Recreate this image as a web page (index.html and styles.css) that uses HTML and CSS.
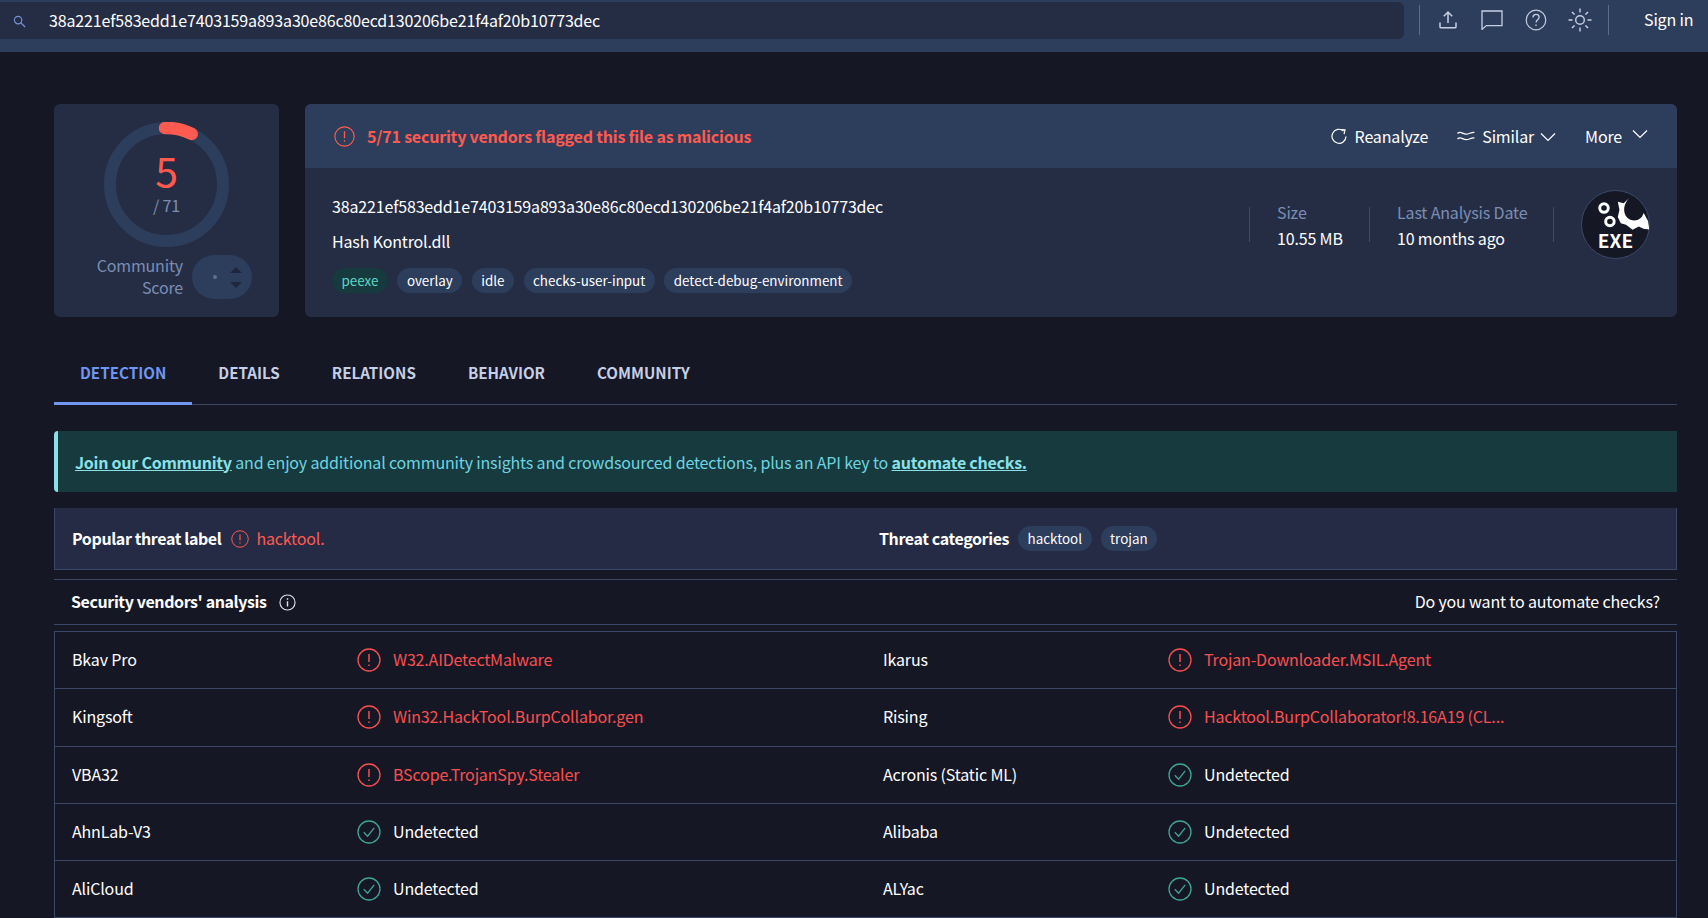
FILE: index.html
```html
<!DOCTYPE html>
<html lang="en">
<head>
  <meta charset="UTF-8">
  <title>VirusTotal - File</title>
  <link rel="stylesheet" href="styles.css">
</head>
<body>
  <svg class="defs" width="0" height="0">
    <symbol id="alert" viewBox="0 0 24 24">
      <circle cx="12" cy="12" r="11" fill="none" stroke="currentColor" stroke-width="1.3"/>
      <path d="M12 6v8M12 16.400v1.600" fill="none" stroke="currentColor" stroke-width="1.500"/>
    </symbol>
    <symbol id="check" viewBox="0 0 24 24">
      <circle cx="12" cy="12" r="11" fill="none" stroke="currentColor" stroke-width="1.3"/>
      <path d="M6.800 12.200l3.800 4 6.600-8.400" fill="none" stroke="currentColor" stroke-width="1.300"/>
    </symbol>
    <symbol id="chevron" viewBox="0 0 16 10">
      <path d="M1 1.500l7 7 7-7" fill="none" stroke="currentColor" stroke-width="1.200"/>
    </symbol>
  </svg>

  <header class="topbar">
    <div class="search">
      <svg class="search-icon" viewBox="0 0 14 14"><circle cx="5.500" cy="5.500" r="4" fill="none" stroke="currentColor" stroke-width="1.200"/><path d="M8.500 8.500l4.500 4.500" stroke="currentColor" stroke-width="1.400"/></svg>
      <span class="search-text">38a221ef583edd1e7403159a893a30e86c80ecd130206be21f4af20b10773dec</span>
    </div>
    <div class="top-actions">
      <svg class="top-icon" viewBox="0 0 20 20"><path d="M10 13V2.200M5.800 6.200L10 2l4.200 4.200M2 12.500v4.200c0 .7.500 1.100 1.100 1.100h13.800c.6 0 1.100-.4 1.100-1.100v-4.200" fill="none" stroke="currentColor" stroke-width="1.500"/></svg>
      <svg class="top-icon wide" viewBox="0 0 22 20"><path d="M1 1h20v14.600H5.400L1 19.400z" fill="none" stroke="currentColor" stroke-width="1.300"/></svg>
      <svg class="top-icon wide tall" viewBox="0 0 22 22"><circle cx="11" cy="11" r="9.800" fill="none" stroke="currentColor" stroke-width="1.200"/><path d="M8 8.400c0-1.800 1.400-3 3.100-3s3 1.200 3 2.800c0 2.500-3 2.500-3 5.200M11 15.500v1.500" fill="none" stroke="currentColor" stroke-width="1.300"/></svg>
      <svg class="top-icon sun" viewBox="0 0 24 24"><circle cx="12" cy="12" r="4.300" fill="none" stroke="currentColor" stroke-width="1.400"/><path d="M12 .5v4M12 19.500v4M.5 12h4M19.500 12h4M3.900 3.900l2.700 2.700M17.400 17.400l2.700 2.700M3.900 20.100l2.700-2.700M17.400 6.600l2.700-2.700" stroke="currentColor" stroke-width="1.400"/></svg>
    </div>
    <a class="sign-in">Sign in</a>
  </header>

  <main class="page">
    <section class="summary">
      <div class="score-card">
        <div class="ring">
          <svg viewBox="0 0 125 125">
            <circle cx="62.500" cy="62.500" r="56.500" fill="none" stroke="#2d3d5c" stroke-width="12"/>
            <path d="M61 6A56.500 56.500 0 0 1 87.700 11.900" fill="none" stroke="#ff5a4f" stroke-width="12.500" stroke-linecap="round"/>
          </svg>
          <div class="ring-text">
            <div class="score">5</div>
            <div class="total">/ 71</div>
          </div>
        </div>
        <div class="community">
          <div class="community-label">Community<br>Score</div>
          <div class="vote">
            <i class="vote-dot"></i>
            <div class="vote-arrows"><i class="arrow-up"></i><i class="arrow-down"></i></div>
          </div>
        </div>
      </div>

      <div class="file-card">
        <div class="file-head">
          <svg class="head-alert"><use href="#alert"/></svg>
          <div class="flag-text">5/71 security vendors flagged this file as malicious</div>
          <button class="head-btn reanalyze">
            <svg class="btn-icon" viewBox="0 0 16 16"><path d="M12.600 3A7 7 0 1 0 15 8.500" fill="none" stroke="currentColor" stroke-width="1.200"/><path d="M9 1.500l5 .3-.9 4.400" fill="none" stroke="currentColor" stroke-width="1.200"/></svg>
            Reanalyze
          </button>
          <button class="head-btn similar">
            <svg class="btn-icon wave" viewBox="0 0 18 12"><path d="M.5 3.500c3-3 5 .7 8.500.7s5-2.200 8.500-1.700M.5 9c3-3 5 .7 8.500.7s5-2.200 8.500-1.700" fill="none" stroke="currentColor" stroke-width="1.200"/></svg>
            Similar
            <svg class="chev"><use href="#chevron"/></svg>
          </button>
          <button class="head-btn more">
            More
            <svg class="chev chev-up"><use href="#chevron"/></svg>
          </button>
        </div>
        <div class="file-body">
          <div class="file-info">
            <div class="hash">38a221ef583edd1e7403159a893a30e86c80ecd130206be21f4af20b10773dec</div>
            <div class="file-name">Hash Kontrol.dll</div>
            <div class="tags">
              <span class="tag tag-green">peexe</span>
              <span class="tag">overlay</span>
              <span class="tag">idle</span>
              <span class="tag">checks-user-input</span>
              <span class="tag">detect-debug-environment</span>
            </div>
          </div>
          <div class="stat stat-size">
            <div class="stat-label">Size</div>
            <div class="stat-value">10.55 MB</div>
          </div>
          <div class="stat stat-date">
            <div class="stat-label">Last Analysis Date</div>
            <div class="stat-value">10 months ago</div>
          </div>
          <div class="exe-badge">
            <svg class="exe-gears" viewBox="63 33 204 204">
              <circle cx="130" cy="85" r="13" fill="none" stroke="#fff" stroke-width="9"/>
              <circle cx="148" cy="126" r="13" fill="none" stroke="#fff" stroke-width="9"/>
              <path d="M172 66L190 70L205 56C192 72 188 88 194 104C202 124 228 130 245 112L251 100L264 124L268 150L250 148L236 141L217 151L197 136L181 131L172 112L177 90Z" fill="#fff"/>
            </svg>
            <span class="exe-text">EXE</span>
          </div>
        </div>
      </div>
    </section>

    <nav class="tabs">
      <a class="tab active">Detection</a>
      <a class="tab">Details</a>
      <a class="tab">Relations</a>
      <a class="tab">Behavior</a>
      <a class="tab">Community</a>
    </nav>

    <div class="banner">
      <a class="banner-link">Join our Community</a>&nbsp;and enjoy additional community insights and crowdsourced detections, plus an API key to&nbsp;<a class="banner-link">automate checks.</a>
    </div>

    <div class="threat-bar">
      <div class="threat-col">
        <b>Popular threat label</b>
        <svg class="threat-alert"><use href="#alert"/></svg>
        <span class="threat-name">hacktool.</span>
      </div>
      <div class="threat-col threat-cats">
        <b>Threat categories</b>
        <span class="tag">hacktool</span>
        <span class="tag">trojan</span>
      </div>
    </div>

    <div class="analysis-head">
      <b>Security vendors' analysis</b>
      <svg class="info-icon" viewBox="0 0 18 18"><circle cx="9" cy="9" r="8" fill="none" stroke="currentColor" stroke-width="1.200"/><path d="M9 7.800v5.400M9 4.600v1.600" stroke="currentColor" stroke-width="1.500"/></svg>
      <span class="automate">Do you want to automate checks?</span>
    </div>

    <div class="vendors">
      <div class="vendor"><span class="vendor-name">Bkav Pro</span><svg class="verdict-icon bad"><use href="#alert"/></svg><span class="verdict bad">W32.AIDetectMalware</span></div>
      <div class="vendor"><span class="vendor-name">Ikarus</span><svg class="verdict-icon bad"><use href="#alert"/></svg><span class="verdict bad">Trojan-Downloader.MSIL.Agent</span></div>
      <div class="vendor"><span class="vendor-name">Kingsoft</span><svg class="verdict-icon bad"><use href="#alert"/></svg><span class="verdict bad">Win32.HackTool.BurpCollabor.gen</span></div>
      <div class="vendor"><span class="vendor-name">Rising</span><svg class="verdict-icon bad"><use href="#alert"/></svg><span class="verdict bad">Hacktool.BurpCollaborator!8.16A19 (CL...</span></div>
      <div class="vendor"><span class="vendor-name">VBA32</span><svg class="verdict-icon bad"><use href="#alert"/></svg><span class="verdict bad">BScope.TrojanSpy.Stealer</span></div>
      <div class="vendor"><span class="vendor-name">Acronis (Static ML)</span><svg class="verdict-icon ok"><use href="#check"/></svg><span class="verdict">Undetected</span></div>
      <div class="vendor"><span class="vendor-name">AhnLab-V3</span><svg class="verdict-icon ok"><use href="#check"/></svg><span class="verdict">Undetected</span></div>
      <div class="vendor"><span class="vendor-name">Alibaba</span><svg class="verdict-icon ok"><use href="#check"/></svg><span class="verdict">Undetected</span></div>
      <div class="vendor"><span class="vendor-name">AliCloud</span><svg class="verdict-icon ok"><use href="#check"/></svg><span class="verdict">Undetected</span></div>
      <div class="vendor"><span class="vendor-name">ALYac</span><svg class="verdict-icon ok"><use href="#check"/></svg><span class="verdict">Undetected</span></div>
    </div>
  </main>
</body>
</html>
```

FILE: styles.css
```css
* {
  margin: 0; padding: 0; box-sizing: border-box;
}
html, body {
  height: 100%;
  overflow: hidden;
}
body {
  background: #161725;
  color: #fff;
  font-family: "Noto Sans CJK SC", "Noto Sans", sans-serif;
  font-size: 16px;
  line-height: 22px;
  letter-spacing: -0.16px;
}
.defs {
  display: block;
  height: 0;
}

/* top bar */
.topbar {
  height: 52px;
  background: #2d3d5c;
  display: flex;
  align-items: flex-start;
  padding-top: 2px;
}
.search {
  width: 1404px; height: 37px;
  background: #252d45;
  border-radius: 0 6px 6px 0;
  display: flex;
  align-items: center;
  padding-left: 13px;
}
.search-icon {
  width: 13px; height: 13px;
  color: #7b93d6;
  margin-right: 23px;
  margin-top: 2px;
}
.search-text {
  margin-top: -2px;
}
.top-actions {
  margin-left: 15px;
  height: 30px;
  margin-top: 3px;
  width: 190px;
  border-left: 1px solid #5a6c90;
  border-right: 1px solid #5a6c90;
  display: flex;
  align-items: center;
  color: #c7d0e2;
  padding-left: 6px;
}
.top-icon {
  width: 20px; height: 20px;
  margin: 0 12px;
  flex: none;
}
.top-icon.wide {
  width: 22px;
  margin: 0 11px;
}
.top-icon.tall {
  height: 22px;
}
.sun {
  width: 24px; height: 24px;
  margin: 0 10px;
}
.sign-in {
  margin-left: 35px;
  margin-top: 6px;
}

/* summary cards */
.page {
  padding: 52px 31px 0 54px;
}
.summary {
  display: flex;
  gap: 26px;
  height: 213px;
}
.score-card {
  width: 225px;
  background: #252d45;
  border-radius: 6px;
  padding-top: 18px;
  padding-left: 50px;
}
.ring {
  width: 125px; height: 125px;
  position: relative;
}
.ring svg {
  display: block;
  width: 125px; height: 125px;
}
.ring-text {
  position: absolute;
  left: 0; top: 0;
  width: 100%;
  text-align: center;
}
.score {
  color: #ff5a4f;
  font-size: 41px;
  line-height: 44px;
  margin-top: 25px;
}
.total {
  color: #7c8db3;
  font-size: 16px;
  line-height: 22px;
  margin-top: 3px;
}
.community {
  display: flex;
  margin-top: 8px;
  margin-left: -50px;
}
.community-label {
  width: 129px;
  text-align: right;
  color: #7c8db3;
  line-height: 22px;
  margin-top: -1px;
}
.vote {
  margin-left: 9px;
  width: 60px; height: 44px;
  background: #2d3d5c;
  border-radius: 22px;
  display: flex;
  align-items: center;
  padding-left: 21px;
}
.vote-dot {
  width: 4px; height: 4px;
  border-radius: 50%;
  background: #5f6f90;
}
.vote-arrows {
  margin-left: 13px;
  display: flex;
  flex-direction: column;
  gap: 9px;
}
.arrow-up, .arrow-down {
  width: 0; height: 0;
  border-left: 6px solid transparent;
  border-right: 6px solid transparent;
}
.arrow-up {
  border-bottom: 6px solid #1f2740;
}
.arrow-down {
  border-top: 6px solid #1f2740;
}
.file-card {
  flex: 1;
  background: #252d45;
  border-radius: 6px;
  overflow: hidden;
}
.file-head {
  height: 64px;
  background: #2d3d5c;
  display: flex;
  align-items: center;
  padding-left: 29px;
}
.head-alert {
  width: 21px; height: 21px;
  color: #ff5a4f;
  flex: none;
}
.flag-text {
  color: #ff5a4f;
  font-weight: 600;
  letter-spacing: -0.2px;
  margin-left: 12px;
  flex: 1;
}
.head-btn {
  background: none;
  border: 0;
  color: #fff;
  font: inherit;
  letter-spacing: inherit;
  display: flex;
  align-items: center;
}
.btn-icon {
  width: 16px; height: 16px;
  margin-right: 8px;
}
.wave {
  width: 18px; height: 12px;
  margin-right: 7px;
}
.similar {
  margin-left: 29px;
}
.more {
  margin-left: 29px;
  margin-right: 29px;
}
.chev {
  width: 16px; height: 10px;
  margin-left: 6px;
  margin-top: 2px;
}
.chev-up {
  margin-left: 10px;
  margin-top: -4px;
}
.file-body {
  display: flex;
  padding: 28px 27px 0 27px;
}
.file-info {
  width: 917px;
}
.hash {
  margin-top: -1px;
}
.file-name {
  margin-top: 13px;
}
.tags {
  display: flex;
  gap: 9.5px;
  margin-top: 16px;
}
.tag {
  display: inline-block;
  height: 25px;
  line-height: 25px;
  padding: 0 9.500px;
  border-radius: 13px;
  background: #2d3d5c;
  color: #fff;
  font-size: 13.400px;
  letter-spacing: 0;
}
.tag-green {
  background: #163a3e;
  color: #5fd6c6;
}
.stat {
  height: 35px;
  margin-top: 11px;
  border-left: 1px solid #3a4a6b;
  padding-left: 27px;
}
.stat-size {
  width: 120px;
}
.stat-date {
  width: 185px;
  border-right: 1px solid #3a4a6b;
}
.stat-label {
  color: #7c8db3;
  margin-top: -6px;
}
.stat-value {
  margin-top: 4px;
  white-space: nowrap;
}
.exe-badge {
  width: 69px; height: 69px;
  flex: none;
  position: relative;
  border-radius: 50%;
  background: #161725;
  border: 1px solid #3a4a6b;
  margin-top: -6px;
  margin-left: 27px;
  text-align: center;
}
.exe-gears {
  position: absolute;
  left: 0; top: 0;
  width: 67px; height: 67px;
}
.exe-text {
  position: absolute;
  left: 0; top: 39px;
  width: 100%;
  font-size: 19px;
  font-weight: 700;
  letter-spacing: 0;
  line-height: 20px;
}

/* tabs */
.tabs {
  display: flex;
  margin-top: 26px;
  height: 62px;
  border-bottom: 1px solid #3a4766;
}
.tab {
  padding: 0 26px;
  height: 62px;
  line-height: 59px;
  font-size: 15.200px;
  letter-spacing: 0;
  font-weight: 600;
  text-transform: uppercase;
  color: #c5cfe6;
}
.tab.active {
  color: #6f96f0;
  border-bottom: 3px solid #6f96f0;
}

/* banner */
.banner {
  margin-top: 26px;
  height: 61px;
  background: #163a3e;
  border-left: 4px solid #8be0e8;
  border-radius: 4px 0 0 4px;
  color: #6ed4e0;
  padding-left: 17px;
  display: flex;
  align-items: center;
}
.banner-link {
  font-weight: 700;
  letter-spacing: -0.25px;
  text-decoration: underline;
  color: #8be0e8;
}

/* threat label */
.threat-bar {
  margin-top: 16px;
  height: 62px;
  background: #252b45;
  border: 1px solid #3a4766;
  border-top: 0;
  display: flex;
  align-items: center;
  padding-left: 17px;
}
.threat-col {
  display: flex;
  align-items: center;
}
.threat-col:first-child {
  width: 807px;
}
.threat-col b, .analysis-head b {
  font-weight: 600;
  letter-spacing: -0.4px;
}
.threat-alert {
  width: 18px; height: 18px;
  color: #ff5a4f;
  margin-left: 10px;
}
.threat-name {
  color: #ff5a4f;
  margin-left: 7px;
}
.threat-col b, .threat-name {
  margin-bottom: 2px;
}
.threat-cats .tag {
  margin-left: 9px;
}

/* vendors table */
.analysis-head {
  margin-top: 9px;
  height: 46px;
  border-top: 1px solid #3a4766;
  border-bottom: 1px solid #3a4766;
  display: flex;
  align-items: center;
  padding: 0 17px;
}
.analysis-head b, .automate {
  margin-bottom: 2px;
}
.info-icon {
  width: 17px; height: 17px;
  margin-left: 12px;
  color: #dfe3ee;
}
.automate {
  margin-left: auto;
}
.vendors {
  margin-top: 6px;
  border: 1px solid #3a4766;
  border-bottom: 0;
  display: grid;
  grid-template-columns: 811px 1fr;
}
.vendor {
  height: 57.300px;
  border-bottom: 1px solid #3a4766;
  display: flex;
  align-items: center;
  padding-left: 17px;
}
.vendor-name {
  width: 285px;
  flex: none;
  margin-bottom: 2px;
}
.verdict-icon {
  width: 24px; height: 24px;
  flex: none;
}
.verdict-icon.bad {
  color: #f94f4f;
}
.verdict-icon.ok {
  color: #3fa396;
}
.verdict {
  margin-left: 12px;
  margin-bottom: 2px;
}
.verdict.bad {
  color: #f94f4f;
}
```
